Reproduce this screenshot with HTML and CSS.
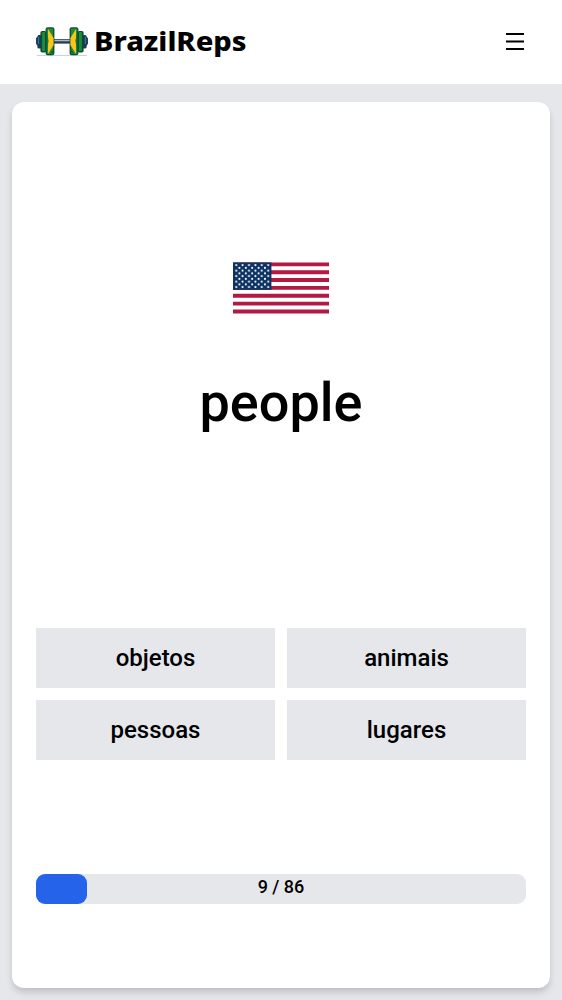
FILE: index.html
```html
<!DOCTYPE html>
<html lang="en">
<head>
<meta charset="utf-8">
<title>BrazilReps</title>
<link rel="stylesheet" href="styles.css">
</head>
<body>
<header class="header">
  <a class="brand">
    <svg class="logo" viewBox="0 0 52 30" aria-hidden="true">
      <path d="M1 28.500h50" stroke="#c3d5d8" stroke-width="1"/>
      <rect x="17" y="12" width="18" height="4.600" fill="#253c52"/>
      <path d="M17 13.500h18" stroke="#a5bac5" stroke-width="1.600"/>
      <g id="plates">
        <path d="M0 11l3-2v11l-3-3z" fill="#194264"/>
        <rect x="1.400" y="8" width="4.400" height="13.500" rx="1.600" fill="#17395a"/>
        <path d="M2.600 10v7" stroke="#3b82a0" stroke-width="1"/>
        <rect x="4.400" y="4" width="6" height="21.500" rx="1.800" fill="#12482f"/>
        <path d="M7.600 5v19" stroke="#198c3f" stroke-width="3"/>
        <rect x="9.600" y=".3" width="8.800" height="28" rx="2" fill="#174a31"/>
        <path d="M10.800 1.500h6.200v25.500h-6.200z" fill="#16903d"/>
        <path d="M12 2l5.600 9v7l-5.600 9z" fill="#f8c613"/>
        <path d="M10.800 5l1.800 9-1.800 9z" fill="#17743a"/>
        <path d="M14 26.500l3.400-5v5z" fill="#176435"/>
      </g>
      <use href="#plates" transform="translate(52 0) scale(-1 1)"/>
    </svg>
    <span class="brand-name">BrazilReps</span>
  </a>
  <button class="menu" aria-label="Menu">
    <svg class="menu-icon" viewBox="0 0 18 18" aria-hidden="true"><path d="M0 1h18M0 8.500h18M0 16h18" stroke="#000" stroke-width="2"/></svg>
  </button>
</header>
<main class="page">
  <section class="card">
    <div class="prompt">
      <svg class="flag" viewBox="0 -.4 96 52" aria-label="United States">
        <defs>
          <pattern id="stars" width="6.400" height="5.500" patternUnits="userSpaceOnUse">
            <circle cx="3.200" cy="2.750" r="1.050" fill="#fff"/>
            <circle cx="6.400" cy="5.500" r="1.050" fill="#fff"/>
            <circle cx="6.400" cy="0" r="1.050" fill="#fff"/>
            <circle cx="0" cy="0" r="1.050" fill="#fff"/>
            <circle cx="0" cy="5.500" r="1.050" fill="#fff"/>
          </pattern>
        </defs>
        <rect width="96" height="51" fill="#fff"/>
        <path d="M0 1.960h96M0 9.810h96M0 17.650h96M0 25.500h96M0 33.350h96M0 41.190h96M0 49.040h96" stroke="#b31942" stroke-width="3.920"/>
        <rect width="38.400" height="27.460" fill="#0a3161"/>
        <rect x="1.600" y="1.400" width="35.200" height="24.700" fill="url(#stars)"/>
      </svg>
      <h1 class="word">people</h1>
    </div>
    <div class="options">
      <button class="option">objetos</button>
      <button class="option">animais</button>
      <button class="option">pessoas</button>
      <button class="option">lugares</button>
    </div>
    <div class="progress">
      <div class="progress-fill" style="width: 10.465%"></div>
      <span class="progress-label">9 / 86</span>
    </div>
  </section>
</main>
</body>
</html>
```
FILE: styles.css
```css
* { box-sizing: border-box; }
body {
  margin: 0;
  height: 1000px;
  display: flex;
  flex-direction: column;
  overflow: hidden;
  background: #e5e7eb;
  color: #000;
  font-family: Roboto, sans-serif;
}
button { border: 0; padding: 0; color: inherit; font: inherit; }
.header {
  height: 84px;
  flex: none;
  display: flex;
  align-items: center;
  justify-content: space-between;
  padding: 0 38px 0 36px;
  background: #fff;
}
.brand { display: flex; align-items: center; gap: 6px; }
.logo { width: 52px; height: 30px; display: block; }
.brand-name {
  margin-bottom: 2px;
  font: 800 27px/34px "Noto Sans", "Open Sans", sans-serif;
  transform: scaleX(1.076);
  transform-origin: left;
}
.menu { background: none; }
.menu-icon { display: block; width: 18px; height: 18px; }
.page { flex: 1; display: flex; padding: 18px 12px 12px; }
.card {
  flex: 1;
  display: flex;
  flex-direction: column;
  padding: 24px;
  border-radius: 12px;
  background: #fff;
  box-shadow: 0 6px 9px -1.5px rgba(0, 0, 0, .1), 0 3px 6px -1.5px rgba(0, 0, 0, .1);
}
.prompt {
  height: 502px;
  display: flex;
  flex-direction: column;
  align-items: center;
  padding-top: 136px;
}
.flag { display: block; width: 96px; height: 52px; }
.word { margin: 58px 0 0; font-size: 54px; line-height: 62px; font-weight: 500; }
.options {
  display: grid;
  grid-template-columns: 1fr 1fr;
  grid-auto-rows: 60px;
  gap: 12px;
}
.option { background: #e5e7eb; font-size: 24px; font-weight: 500; }
.progress {
  position: relative;
  height: 30px;
  margin-top: 114px;
  border-radius: 9px;
  background: #e5e7eb;
}
.progress-fill { height: 100%; border-radius: 9px; background: #2563eb; }
.progress-label {
  position: absolute;
  inset: 0;
  text-align: center;
  font-size: 18px;
  line-height: 26px;
  font-weight: 500;
}
```
